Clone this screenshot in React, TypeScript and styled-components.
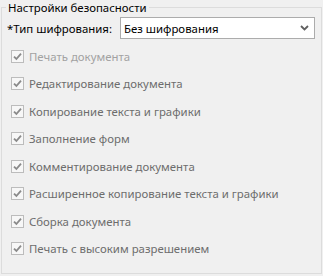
import React from "react";
import styled, { createGlobalStyle } from "styled-components";

const Global = createGlobalStyle`
  html, body { margin: 0; padding: 0; background: #f0f0f0; }
  body { width: 323px; height: 276px; overflow: hidden; font-family: "Noto Sans", "Open Sans", sans-serif; }
`;

const Group = styled.fieldset`
  margin: 0 1px 0 1px;
  height: 274px;
  box-sizing: border-box;
  border: 1px solid #dcdcdc;
  padding: 0 6px 0 4px;
  min-inline-size: 0;
`;

const Legend = styled.legend`
  font-size: 11.4px;
  line-height: 15px;
  color: #000;
  padding: 0 2px;
  margin-left: 0;
`;

const TypeRow = styled.div`
  display: flex;
  align-items: center;
  margin-top: 2px;
  height: 22px;
`;

const TypeLabel = styled.span`
  font-size: 11.4px;
  color: #000;
  width: 113px;
  flex: none;
  padding-left: 1px;
`;

const Select = styled.div`
  flex: 1;
  height: 22px;
  box-sizing: border-box;
  border: 1px solid #acacac;
  background: #fff;
  display: flex;
  align-items: center;
  justify-content: space-between;
  padding: 0 5px 0 3px;
  font-size: 11.4px;
  color: #000;
`;

const List = styled.div`
  display: flex;
  flex-direction: column;
  gap: 14.45px;
  margin-top: 11px;
  padding-left: 5px;
`;

const Row = styled.label<{ $dim?: boolean }>`
  display: flex;
  align-items: center;
  gap: 5px;
  height: 13px;
  font-size: 11.4px;
  color: ${(p) => (p.$dim ? "#a2a2a2" : "#6d6d6d")};
`;

const Box = styled.span`
  width: 13px;
  height: 13px;
  box-sizing: border-box;
  border: 1px solid #bcbcbc;
  background: #f7f7f7;
  display: flex;
  align-items: center;
  justify-content: center;
  flex: none;
`;

const Check = () => (
  <svg width="9" height="9" viewBox="0 0 9 9">
    <path d="M1 4.6 L3.4 7 L8 1.6" stroke="#8a8a8a" strokeWidth="1.8" fill="none" />
  </svg>
);

const Chevron = () => (
  <svg width="9" height="6" viewBox="0 0 9 6">
    <path d="M1 1 L4.5 4.5 L8 1" stroke="#606060" strokeWidth="1.8" fill="none" />
  </svg>
);

const items = [
  "Печать документа",
  "Редактирование документа",
  "Копирование текста и графики",
  "Заполнение форм",
  "Комментирование документа",
  "Расширенное копирование текста и графики",
  "Сборка документа",
  "Печать с высоким разрешением",
];

export default function App() {
  return (
    <>
      <Global />
      <Group>
        <Legend>Настройки безопасности</Legend>
        <TypeRow>
          <TypeLabel>*Тип шифрования:</TypeLabel>
          <Select>
            <span>Без шифрования</span>
            <Chevron />
          </Select>
        </TypeRow>
        <List>
          {items.map((t, i) => (
            <Row key={t} $dim={i === 0}>
              <Box>
                <Check />
              </Box>
              {t}
            </Row>
          ))}
        </List>
      </Group>
    </>
  );
}
